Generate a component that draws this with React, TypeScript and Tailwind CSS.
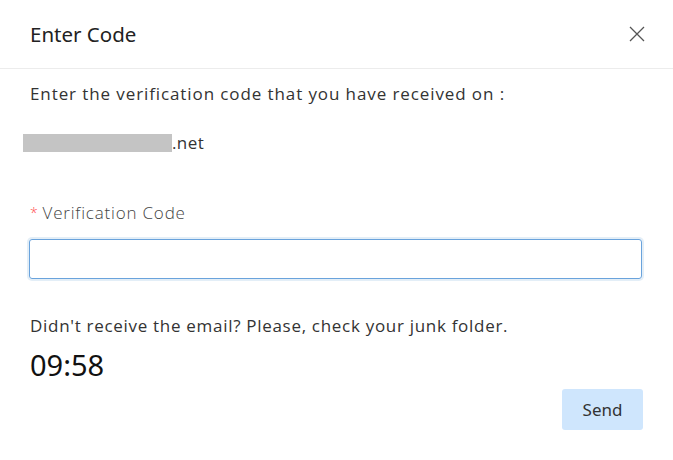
import React from 'react'

export default function App() {
  return (
    <div className="w-[673px] h-[460px] bg-white text-[#333] font-['Open_Sans',sans-serif]">
      {/* Header */}
      <div className="flex items-center justify-between h-[69px] px-[30px] border-b border-[#ececec]">
        <h1 className="text-[20.5px] text-[#222] font-['Noto_Sans',sans-serif] font-normal">Enter Code</h1>
        <button className="w-[16px] h-[16px] mr-[-2px] text-[#555]">
          <svg viewBox="0 0 16 16" width="16" height="16" fill="none" stroke="currentColor" strokeWidth="1.3">
            <path d="M1 1L15 15M15 1L1 15" />
          </svg>
        </button>
      </div>

      {/* Body */}
      <div className="px-[30px] pt-[13px]">
        <p className="text-[17px] leading-[24px] tracking-[0.9px]">Enter the verification code that you have received on :</p>
        <div className="flex items-center mt-[25px] ml-[-7px]">
          <span className="w-[149px] h-[18px] bg-[#c4c4c4]" />
          <span className="text-[17px] leading-[24px] tracking-[0.4px]">.net</span>
        </div>

        <label className="flex items-center mt-[46px] text-[17px] leading-[24px] text-[#444] tracking-[0.8px] font-light">
          <span className="text-[#ff4d4f] mr-[4px] text-[14px]">*</span>
          Verification Code
        </label>
        <input
          className="block w-[613px] h-[40px] mt-[14px] ml-[-1px] rounded-[3px] border border-[#6aa3dc] shadow-[0_0_0_2px_rgba(66,139,202,0.15)] outline-none px-3"
        />

        <p className="mt-[35px] text-[17px] leading-[24px] tracking-[0.7px]">Didn't receive the email? Please, check your junk folder.</p>
        <div className="mt-[10px] text-[29px] leading-[34px] text-[#111] font-['Noto_Sans',sans-serif]">09:58</div>

        <div className="flex justify-end mt-[7px]">
          <button className="w-[81px] h-[41px] rounded-[3px] bg-[#cfe6fd] text-[17px] text-[#333] font-['Noto_Sans',sans-serif]">Send</button>
        </div>
      </div>
    </div>
  )
}
